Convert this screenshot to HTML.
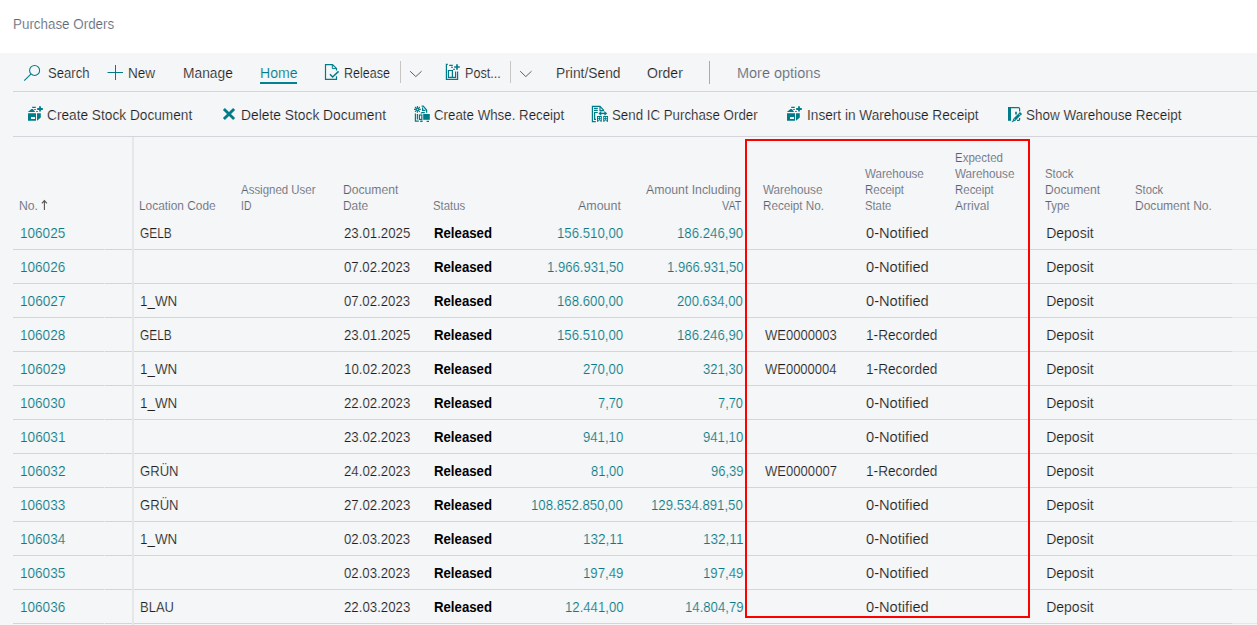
<!DOCTYPE html>
<html lang="en"><head><meta charset="utf-8"><title>Purchase Orders</title>
<style>
*{box-sizing:border-box}
html,body{margin:0;padding:0;background:#fff}
body{width:1257px;height:625px;overflow:hidden;font-family:"Liberation Sans",sans-serif;}
#app{position:relative;width:1257px;height:625px;overflow:hidden;background:#fff}
.content{position:absolute;left:0;top:53px;width:1257px;height:572px;background:#f5f6f8}
.t{position:absolute;white-space:nowrap;transform-origin:0 0;font-size:14px;line-height:normal;color:#1e1e1e;margin:0;padding:0;font-weight:400;display:block;-webkit-text-stroke:0.16px #f5f6f8}
.title{-webkit-text-stroke:0.16px #fff}
.title{color:#5f6877}
.th{font-size:12px;color:#59616f}
.c-no,.c-amt,.c-vat{color:#0a7a85}
.c-status{font-weight:700;color:#000;-webkit-text-stroke:0}
.tb1.home{color:#007c89}
.tb1.more{color:#5f6877}
.hl{position:absolute;background:#d3d5db;height:1px}
.vl{position:absolute;width:1px}
svg{position:absolute;overflow:visible}
.redbox{position:absolute;left:745px;top:139px;width:285px;height:479px;border:2px solid #ff0000}
</style></head><body><div id="app">
<h1 class="t title" style="left:12.84px;top:16px;transform:scaleX(0.9564)">Purchase Orders</h1>
<div class="content"></div>
<div class="toolbar" id="tb1">
<span class="t tb1" style="left:47.90px;top:65px;transform:scaleX(0.9357)">Search</span>
<span class="t tb1" style="left:128.23px;top:65px;transform:scaleX(0.9704)">New</span>
<span class="t tb1" style="left:182.71px;top:65px;transform:scaleX(0.9857)">Manage</span>
<span class="t tb1 home" style="left:259.79px;top:65px;transform:scaleX(1.0070)">Home</span>
<span class="t tb1" style="left:343.61px;top:65px;transform:scaleX(0.8925)">Release</span>
<span class="t tb1" style="left:464.90px;top:65px;transform:scaleX(0.8987)">Post...</span>
<span class="t tb1" style="left:555.91px;top:65px;transform:scaleX(0.9874)">Print/Send</span>
<span class="t tb1" style="left:647.45px;top:65px;transform:scaleX(1.0014)">Order</span>
<span class="t tb1 more" style="left:736.67px;top:65px;transform:scaleX(1.0327)">More options</span>
<div class="hl" style="left:260px;top:82px;width:37px;height:2px;background:#00838f"></div>
<div class="vl" style="left:400px;top:61px;height:22px;background:#c8c6c4"></div>
<div class="vl" style="left:510px;top:61px;height:22px;background:#c8c6c4"></div>
<div class="vl" style="left:709px;top:61px;height:23px;background:#a4abb6"></div>
</div>
<div class="hl" style="left:13px;top:91px;width:1244px"></div>
<div class="toolbar" id="tb2">
<span class="t tb2" style="left:46.87px;top:107px;transform:scaleX(0.9773)">Create Stock Document</span>
<span class="t tb2" style="left:240.71px;top:107px;transform:scaleX(0.9863)">Delete Stock Document</span>
<span class="t tb2" style="left:433.79px;top:107px;transform:scaleX(0.9505)">Create Whse. Receipt</span>
<span class="t tb2" style="left:612.39px;top:107px;transform:scaleX(0.9498)">Send IC Purchase Order</span>
<span class="t tb2" style="left:806.98px;top:107px;transform:scaleX(0.9745)">Insert in Warehouse Receipt</span>
<span class="t tb2" style="left:1026.38px;top:107px;transform:scaleX(0.9632)">Show Warehouse Receipt</span>
</div>
<div class="hl" style="left:13px;top:136px;width:1244px"></div>
<svg class="icons" aria-hidden="true" width="1257" height="625" viewBox="0 0 1257 625" style="left:0;top:0" fill="none" stroke="#007c89" stroke-width="1.2">
<!-- search -->
<g stroke-width="1.05"><circle cx="34.6" cy="70.4" r="5"/><path d="M30.9 74.1 L24.2 80.7"/></g>
<!-- new plus -->
<g stroke-width="1"><path d="M107.5 72.5H123M115.5 65V80"/></g>
<!-- release -->
<g><path d="M336.5 70.6V68.4L332.5 64.6H325.5V79.4H336.5V76.2"/><path d="M332.3 64.8V68.6H336.3" stroke-width="1"/><path d="M330 74.2L332.6 77L338.6 71.4" stroke-width="1.5"/></g>
<!-- chevrons -->
<g stroke="#605e5c" stroke-width="1"><path d="M410.1 71.2L415.8 76.6L421.6 71.2"/><path d="M520.2 71.2L525.8 76.6L531.5 71.2"/></g>
<!-- post -->
<g><path d="M447.8 64.4H446.4V79.4H457.6V71.4"/><path d="M449.2 65.3H452.8M451.2 67.4H452.8M453.2 69.4H454.8"/><path d="M452.4 77.4V70.5H448.4V77.4H455.6V71.4"/><path d="M454.2 67H459.8M457 64.2V69.8" stroke-width="1.7"/></g>
<!-- box icons -->
<g stroke="none" fill="#007c89"><path d="M28 113.2H36V120.8H28ZM31 117.1V118.9H35V117.1Z" fill-rule="evenodd"/><path d="M37 113.2H40.8V117.6L37 120.8Z"/><path d="M27.8 111.9L31.5 108.9H32.9L35.2 111.9Z"/><path d="M32.2 106.8H35.8V107.9H32.2ZM34.2 108.9H35.8V110H34.2ZM36.2 110.9H37.8V112H36.2Z"/><path d="M39.1 106.2H40.9V108.1H42.8V109.9H40.9V111.6H39.1V109.9H37.2V108.1H39.1Z"/></g>
<g stroke="none" fill="#007c89" transform="translate(759 0)"><path d="M28 113.2H36V120.8H28ZM31 117.1V118.9H35V117.1Z" fill-rule="evenodd"/><path d="M37 113.2H40.8V117.6L37 120.8Z"/><path d="M27.8 111.9L31.5 108.9H32.9L35.2 111.9Z"/><path d="M32.2 106.8H35.8V107.9H32.2ZM34.2 108.9H35.8V110H34.2ZM36.2 110.9H37.8V112H36.2Z"/><path d="M39.1 106.2H40.9V108.1H42.8V109.9H40.9V111.6H39.1V109.9H37.2V108.1H39.1Z"/></g>
<!-- delete X -->
<g stroke-width="2.8"><path d="M223.9 108.9L234.1 119.1M234.1 108.9L223.9 119.1"/></g>
<!-- whse receipt -->
<g><path d="M417.4 106V112.8M414 109.4H420.8M415 107L419.8 111.8M419.8 107L415 111.8" stroke-width="1.1"/><circle cx="417.4" cy="109.4" r="1" fill="#f5f6f8" stroke-width="1"/>
<path d="M421.6 106.2H423.2L426.6 110V112.8"/><path d="M422.6 107.6V110.4H425.4"/><path d="M415.4 113.4V121.2H418.8M417.4 114V119.4"/><path d="M421.4 112.6H424.8M421.4 112.6V113.6"/>
<rect x="419.4" y="115" width="2.4" height="4.4"/><rect x="423.2" y="114" width="6.6" height="5.8" fill="#007c89" stroke="none"/><path d="M420.2 121.2H422.6M426.6 121.4H429" stroke-width="1.4"/></g>
<!-- send IC -->
<g><path d="M595.8 121.6H592.4V106.4H600L604 110.6"/><path d="M600 106.4V110.6H604"/><path d="M594 108.4H597.8M594 110.4H597.8M597.8 112.5H594.6V119.4H596"/><path d="M600 113.4H606" stroke-width="1.4"/><path d="M598.4 113.4L601.2 111V115.8ZM607.2 113.4L604.4 111V115.8Z" fill="#007c89" stroke="none"/>
<path d="M597 116H601.8V121.8H600.4V120.4H598.4V121.8H597ZM603.2 116H608V121.8H606.6V120.4H604.6V121.8H603.2Z" fill="#007c89" stroke="none"/>
<path d="M598 117H599V118H598ZM599.9 117H600.9V118H599.9ZM598 118.8H599V119.8H598ZM599.9 118.8H600.9V119.8H599.9ZM604.2 117H605.2V118H604.2ZM606.1 117H607.1V118H606.1ZM604.2 118.8H605.2V119.8H604.2ZM606.1 118.8H607.1V119.8H606.1Z" fill="#f5f6f8" stroke="none"/></g>
<!-- show warehouse receipt -->
<g><path d="M1008 107H1011V120.8H1008Z" fill="#007c89" stroke="none"/><path d="M1010 107.6H1018.4Q1019.6 107.6 1019.6 108.8V111.4"/><path d="M1019.6 118V119.4Q1019.6 120.4 1018.4 120.4H1017"/><path d="M1013.8 120.2L1021 113" stroke-width="3"/><path d="M1011.9 122L1014.2 119L1015.4 120.2Z" fill="#007c89" stroke-width=".6"/><path d="M1016 111.8V114.6" stroke-width="1.7"/><path d="M1018.4 113.6L1020.4 115.6M1013.7 118.5L1015.5 120.3" stroke="#f5f6f8" stroke-width=".6"/></g>
<!-- sort arrow -->
<g stroke="#555" stroke-width="1.1"><path d="M44.4 200.4V209.9M41.9 203.4L44.4 200.6L46.9 203.4"/></g>
</svg>

<div class="thead">
<span class="t th" style="left:19.08px;top:199px;transform:scaleX(1.0182)">No.</span>
<span class="t th" style="left:138.81px;top:199px;transform:scaleX(0.9901)">Location Code</span>
<span class="t th" style="left:241.40px;top:183px;transform:scaleX(0.9551)">Assigned User</span>
<span class="t th" style="left:240.53px;top:199px;transform:scaleX(0.8667)">ID</span>
<span class="t th" style="left:342.69px;top:183px;transform:scaleX(1.0121)">Document</span>
<span class="t th" style="left:342.71px;top:199px;transform:scaleX(0.9937)">Date</span>
<span class="t th" style="left:433.13px;top:199px;transform:scaleX(0.9455)">Status</span>
<span class="t th" style="left:577.90px;top:199px;transform:scaleX(1.0376)">Amount</span>
<span class="t th" style="left:645.50px;top:183px;transform:scaleX(1.0228)">Amount Including</span>
<span class="t th" style="left:721.60px;top:199px;transform:scaleX(0.9035)">VAT</span>
<span class="t th" style="left:762.60px;top:183px;transform:scaleX(0.9752)">Warehouse</span>
<span class="t th" style="left:762.63px;top:199px;transform:scaleX(0.9728)">Receipt No.</span>
<span class="t th" style="left:864.50px;top:167px;transform:scaleX(0.9653)">Warehouse</span>
<span class="t th" style="left:864.54px;top:183px;transform:scaleX(0.9585)">Receipt</span>
<span class="t th" style="left:865.03px;top:199px;transform:scaleX(0.9370)">State</span>
<span class="t th" style="left:954.64px;top:151px;transform:scaleX(0.9596)">Expected</span>
<span class="t th" style="left:954.60px;top:167px;transform:scaleX(0.9752)">Warehouse</span>
<span class="t th" style="left:954.65px;top:183px;transform:scaleX(0.9535)">Receipt</span>
<span class="t th" style="left:954.60px;top:199px;transform:scaleX(1.0045)">Arrival</span>
<span class="t th" style="left:1045.03px;top:167px;transform:scaleX(0.9458)">Stock</span>
<span class="t th" style="left:1045.49px;top:183px;transform:scaleX(1.0065)">Document</span>
<span class="t th" style="left:1045.06px;top:199px;transform:scaleX(0.9426)">Type</span>
<span class="t th" style="left:1135.43px;top:183px;transform:scaleX(0.9390)">Stock</span>
<span class="t th" style="left:1135.40px;top:199px;transform:scaleX(1.0020)">Document No.</span>
</div>
<div class="tbody">
<div class="row">
<span class="t c-no" style="left:20.23px;top:225px;transform:scaleX(0.9680)">106025</span>
<span class="t c-loc" style="left:139.66px;top:225px;transform:scaleX(0.8503)">GELB</span>
<span class="t c-date" style="left:343.79px;top:225px;transform:scaleX(0.9469)">23.01.2025</span>
<span class="t c-status" style="left:433.96px;top:225px;transform:scaleX(0.9429)">Released</span>
<span class="t c-amt" style="left:557.14px;top:225px;transform:scaleX(0.9434)">156.510,00</span>
<span class="t c-vat" style="left:677.14px;top:225px;transform:scaleX(0.9434)">186.246,90</span>
<span class="t c-st" style="left:866.38px;top:225px;transform:scaleX(1.0462)">0-Notified</span>
<span class="t c-type" style="left:1046.20px;top:225px;transform:scaleX(1.0000)">Deposit</span>
<div class="hl" style="left:13px;top:249px;width:91px"></div>
<div class="hl" style="left:104px;top:249px;width:1px;background:#e4e6ea"></div>
<div class="hl" style="left:105px;top:249px;width:1127px"></div>
<div class="hl" style="left:1232px;top:249px;width:25px;background:#e6e7e8"></div>
</div>
<div class="row">
<span class="t c-no" style="left:20.23px;top:259px;transform:scaleX(0.9680)">106026</span>
<span class="t c-date" style="left:344.03px;top:259px;transform:scaleX(0.9435)">07.02.2023</span>
<span class="t c-status" style="left:433.96px;top:259px;transform:scaleX(0.9429)">Released</span>
<span class="t c-amt" style="left:546.57px;top:259px;transform:scaleX(0.9370)">1.966.931,50</span>
<span class="t c-vat" style="left:666.57px;top:259px;transform:scaleX(0.9370)">1.966.931,50</span>
<span class="t c-st" style="left:866.38px;top:259px;transform:scaleX(1.0462)">0-Notified</span>
<span class="t c-type" style="left:1046.20px;top:259px;transform:scaleX(1.0000)">Deposit</span>
<div class="hl" style="left:13px;top:283px;width:91px"></div>
<div class="hl" style="left:104px;top:283px;width:1px;background:#e4e6ea"></div>
<div class="hl" style="left:105px;top:283px;width:1127px"></div>
<div class="hl" style="left:1232px;top:283px;width:25px;background:#e6e7e8"></div>
</div>
<div class="row">
<span class="t c-no" style="left:20.23px;top:293px;transform:scaleX(0.9733)">106027</span>
<span class="t c-loc" style="left:140.24px;top:293px;transform:scaleX(0.9578)">1_WN</span>
<span class="t c-date" style="left:344.03px;top:293px;transform:scaleX(0.9435)">07.02.2023</span>
<span class="t c-status" style="left:433.96px;top:293px;transform:scaleX(0.9429)">Released</span>
<span class="t c-amt" style="left:557.14px;top:293px;transform:scaleX(0.9434)">168.600,00</span>
<span class="t c-vat" style="left:677.38px;top:293px;transform:scaleX(0.9399)">200.634,00</span>
<span class="t c-st" style="left:866.38px;top:293px;transform:scaleX(1.0462)">0-Notified</span>
<span class="t c-type" style="left:1046.20px;top:293px;transform:scaleX(1.0000)">Deposit</span>
<div class="hl" style="left:13px;top:317px;width:91px"></div>
<div class="hl" style="left:104px;top:317px;width:1px;background:#e4e6ea"></div>
<div class="hl" style="left:105px;top:317px;width:1127px"></div>
<div class="hl" style="left:1232px;top:317px;width:25px;background:#e6e7e8"></div>
</div>
<div class="row">
<span class="t c-no" style="left:20.23px;top:327px;transform:scaleX(0.9680)">106028</span>
<span class="t c-loc" style="left:139.66px;top:327px;transform:scaleX(0.8503)">GELB</span>
<span class="t c-date" style="left:343.79px;top:327px;transform:scaleX(0.9469)">23.01.2025</span>
<span class="t c-status" style="left:433.96px;top:327px;transform:scaleX(0.9429)">Released</span>
<span class="t c-amt" style="left:557.14px;top:327px;transform:scaleX(0.9434)">156.510,00</span>
<span class="t c-vat" style="left:677.14px;top:327px;transform:scaleX(0.9434)">186.246,90</span>
<span class="t c-wr" style="left:764.90px;top:327px;transform:scaleX(0.9307)">WE0000003</span>
<span class="t c-st" style="left:866.22px;top:327px;transform:scaleX(0.9754)">1-Recorded</span>
<span class="t c-type" style="left:1046.20px;top:327px;transform:scaleX(1.0000)">Deposit</span>
<div class="hl" style="left:13px;top:351px;width:91px"></div>
<div class="hl" style="left:104px;top:351px;width:1px;background:#e4e6ea"></div>
<div class="hl" style="left:105px;top:351px;width:1127px"></div>
<div class="hl" style="left:1232px;top:351px;width:25px;background:#e6e7e8"></div>
</div>
<div class="row">
<span class="t c-no" style="left:20.23px;top:361px;transform:scaleX(0.9733)">106029</span>
<span class="t c-loc" style="left:140.24px;top:361px;transform:scaleX(0.9578)">1_WN</span>
<span class="t c-date" style="left:343.55px;top:361px;transform:scaleX(0.9504)">10.02.2023</span>
<span class="t c-status" style="left:433.96px;top:361px;transform:scaleX(0.9429)">Released</span>
<span class="t c-amt" style="left:583.04px;top:361px;transform:scaleX(0.9387)">270,00</span>
<span class="t c-vat" style="left:703.28px;top:361px;transform:scaleX(0.9331)">321,30</span>
<span class="t c-wr" style="left:764.90px;top:361px;transform:scaleX(0.9277)">WE0000004</span>
<span class="t c-st" style="left:866.22px;top:361px;transform:scaleX(0.9754)">1-Recorded</span>
<span class="t c-type" style="left:1046.20px;top:361px;transform:scaleX(1.0000)">Deposit</span>
<div class="hl" style="left:13px;top:385px;width:91px"></div>
<div class="hl" style="left:104px;top:385px;width:1px;background:#e4e6ea"></div>
<div class="hl" style="left:105px;top:385px;width:1127px"></div>
<div class="hl" style="left:1232px;top:385px;width:25px;background:#e6e7e8"></div>
</div>
<div class="row">
<span class="t c-no" style="left:20.23px;top:395px;transform:scaleX(0.9680)">106030</span>
<span class="t c-loc" style="left:140.24px;top:395px;transform:scaleX(0.9578)">1_WN</span>
<span class="t c-date" style="left:343.79px;top:395px;transform:scaleX(0.9469)">22.02.2023</span>
<span class="t c-status" style="left:433.96px;top:395px;transform:scaleX(0.9429)">Released</span>
<span class="t c-amt" style="left:598.15px;top:395px;transform:scaleX(0.9179)">7,70</span>
<span class="t c-vat" style="left:718.15px;top:395px;transform:scaleX(0.9179)">7,70</span>
<span class="t c-st" style="left:866.38px;top:395px;transform:scaleX(1.0462)">0-Notified</span>
<span class="t c-type" style="left:1046.20px;top:395px;transform:scaleX(1.0000)">Deposit</span>
<div class="hl" style="left:13px;top:419px;width:91px"></div>
<div class="hl" style="left:104px;top:419px;width:1px;background:#e4e6ea"></div>
<div class="hl" style="left:105px;top:419px;width:1127px"></div>
<div class="hl" style="left:1232px;top:419px;width:25px;background:#e6e7e8"></div>
</div>
<div class="row">
<span class="t c-no" style="left:20.23px;top:429px;transform:scaleX(0.9733)">106031</span>
<span class="t c-date" style="left:343.79px;top:429px;transform:scaleX(0.9469)">23.02.2023</span>
<span class="t c-status" style="left:433.96px;top:429px;transform:scaleX(0.9429)">Released</span>
<span class="t c-amt" style="left:583.04px;top:429px;transform:scaleX(0.9387)">941,10</span>
<span class="t c-vat" style="left:703.04px;top:429px;transform:scaleX(0.9387)">941,10</span>
<span class="t c-st" style="left:866.38px;top:429px;transform:scaleX(1.0462)">0-Notified</span>
<span class="t c-type" style="left:1046.20px;top:429px;transform:scaleX(1.0000)">Deposit</span>
<div class="hl" style="left:13px;top:453px;width:91px"></div>
<div class="hl" style="left:104px;top:453px;width:1px;background:#e4e6ea"></div>
<div class="hl" style="left:105px;top:453px;width:1127px"></div>
<div class="hl" style="left:1232px;top:453px;width:25px;background:#e6e7e8"></div>
</div>
<div class="row">
<span class="t c-no" style="left:20.23px;top:463px;transform:scaleX(0.9733)">106032</span>
<span class="t c-loc" style="left:139.90px;top:463px;transform:scaleX(0.9350)">GRÜN</span>
<span class="t c-date" style="left:343.79px;top:463px;transform:scaleX(0.9469)">24.02.2023</span>
<span class="t c-status" style="left:433.96px;top:463px;transform:scaleX(0.9429)">Released</span>
<span class="t c-amt" style="left:590.83px;top:463px;transform:scaleX(0.9238)">81,00</span>
<span class="t c-vat" style="left:710.59px;top:463px;transform:scaleX(0.9307)">96,39</span>
<span class="t c-wr" style="left:764.90px;top:463px;transform:scaleX(0.9338)">WE0000007</span>
<span class="t c-st" style="left:866.22px;top:463px;transform:scaleX(0.9754)">1-Recorded</span>
<span class="t c-type" style="left:1046.20px;top:463px;transform:scaleX(1.0000)">Deposit</span>
<div class="hl" style="left:13px;top:487px;width:91px"></div>
<div class="hl" style="left:104px;top:487px;width:1px;background:#e4e6ea"></div>
<div class="hl" style="left:105px;top:487px;width:1127px"></div>
<div class="hl" style="left:1232px;top:487px;width:25px;background:#e6e7e8"></div>
</div>
<div class="row">
<span class="t c-no" style="left:20.23px;top:497px;transform:scaleX(0.9680)">106033</span>
<span class="t c-loc" style="left:139.90px;top:497px;transform:scaleX(0.9350)">GRÜN</span>
<span class="t c-date" style="left:343.79px;top:497px;transform:scaleX(0.9469)">27.02.2023</span>
<span class="t c-status" style="left:433.96px;top:497px;transform:scaleX(0.9429)">Released</span>
<span class="t c-amt" style="left:531.47px;top:497px;transform:scaleX(0.9429)">108.852.850,00</span>
<span class="t c-vat" style="left:651.47px;top:497px;transform:scaleX(0.9429)">129.534.891,50</span>
<span class="t c-st" style="left:866.38px;top:497px;transform:scaleX(1.0462)">0-Notified</span>
<span class="t c-type" style="left:1046.20px;top:497px;transform:scaleX(1.0000)">Deposit</span>
<div class="hl" style="left:13px;top:521px;width:91px"></div>
<div class="hl" style="left:104px;top:521px;width:1px;background:#e4e6ea"></div>
<div class="hl" style="left:105px;top:521px;width:1127px"></div>
<div class="hl" style="left:1232px;top:521px;width:25px;background:#e6e7e8"></div>
</div>
<div class="row">
<span class="t c-no" style="left:20.23px;top:531px;transform:scaleX(0.9680)">106034</span>
<span class="t c-loc" style="left:140.24px;top:531px;transform:scaleX(0.9578)">1_WN</span>
<span class="t c-date" style="left:344.03px;top:531px;transform:scaleX(0.9435)">02.03.2023</span>
<span class="t c-status" style="left:433.96px;top:531px;transform:scaleX(0.9429)">Released</span>
<span class="t c-amt" style="left:582.78px;top:531px;transform:scaleX(0.9678)">132,11</span>
<span class="t c-vat" style="left:702.78px;top:531px;transform:scaleX(0.9678)">132,11</span>
<span class="t c-st" style="left:866.38px;top:531px;transform:scaleX(1.0462)">0-Notified</span>
<span class="t c-type" style="left:1046.20px;top:531px;transform:scaleX(1.0000)">Deposit</span>
<div class="hl" style="left:13px;top:555px;width:91px"></div>
<div class="hl" style="left:104px;top:555px;width:1px;background:#e4e6ea"></div>
<div class="hl" style="left:105px;top:555px;width:1127px"></div>
<div class="hl" style="left:1232px;top:555px;width:25px;background:#e6e7e8"></div>
</div>
<div class="row">
<span class="t c-no" style="left:20.23px;top:565px;transform:scaleX(0.9680)">106035</span>
<span class="t c-date" style="left:344.03px;top:565px;transform:scaleX(0.9435)">02.03.2023</span>
<span class="t c-status" style="left:433.96px;top:565px;transform:scaleX(0.9429)">Released</span>
<span class="t c-amt" style="left:582.80px;top:565px;transform:scaleX(0.9444)">197,49</span>
<span class="t c-vat" style="left:702.80px;top:565px;transform:scaleX(0.9444)">197,49</span>
<span class="t c-st" style="left:866.38px;top:565px;transform:scaleX(1.0462)">0-Notified</span>
<span class="t c-type" style="left:1046.20px;top:565px;transform:scaleX(1.0000)">Deposit</span>
<div class="hl" style="left:13px;top:589px;width:91px"></div>
<div class="hl" style="left:104px;top:589px;width:1px;background:#e4e6ea"></div>
<div class="hl" style="left:105px;top:589px;width:1127px"></div>
<div class="hl" style="left:1232px;top:589px;width:25px;background:#e6e7e8"></div>
</div>
<div class="row">
<span class="t c-no" style="left:20.23px;top:599px;transform:scaleX(0.9680)">106036</span>
<span class="t c-loc" style="left:139.67px;top:599px;transform:scaleX(0.9275)">BLAU</span>
<span class="t c-date" style="left:343.79px;top:599px;transform:scaleX(0.9469)">22.03.2023</span>
<span class="t c-status" style="left:433.96px;top:599px;transform:scaleX(0.9429)">Released</span>
<span class="t c-amt" style="left:564.69px;top:599px;transform:scaleX(0.9395)">12.441,00</span>
<span class="t c-vat" style="left:684.69px;top:599px;transform:scaleX(0.9395)">14.804,79</span>
<span class="t c-st" style="left:866.38px;top:599px;transform:scaleX(1.0462)">0-Notified</span>
<span class="t c-type" style="left:1046.20px;top:599px;transform:scaleX(1.0000)">Deposit</span>
<div class="hl" style="left:13px;top:623px;width:91px"></div>
<div class="hl" style="left:104px;top:623px;width:1px;background:#e4e6ea"></div>
<div class="hl" style="left:105px;top:623px;width:1127px"></div>
<div class="hl" style="left:1232px;top:623px;width:25px;background:#e6e7e8"></div>
</div>
</div>
<div class="vl" style="left:132px;top:137px;width:2px;height:488px;background:#e6e7e9"></div>
<div class="redbox"></div>
</div></body></html>
